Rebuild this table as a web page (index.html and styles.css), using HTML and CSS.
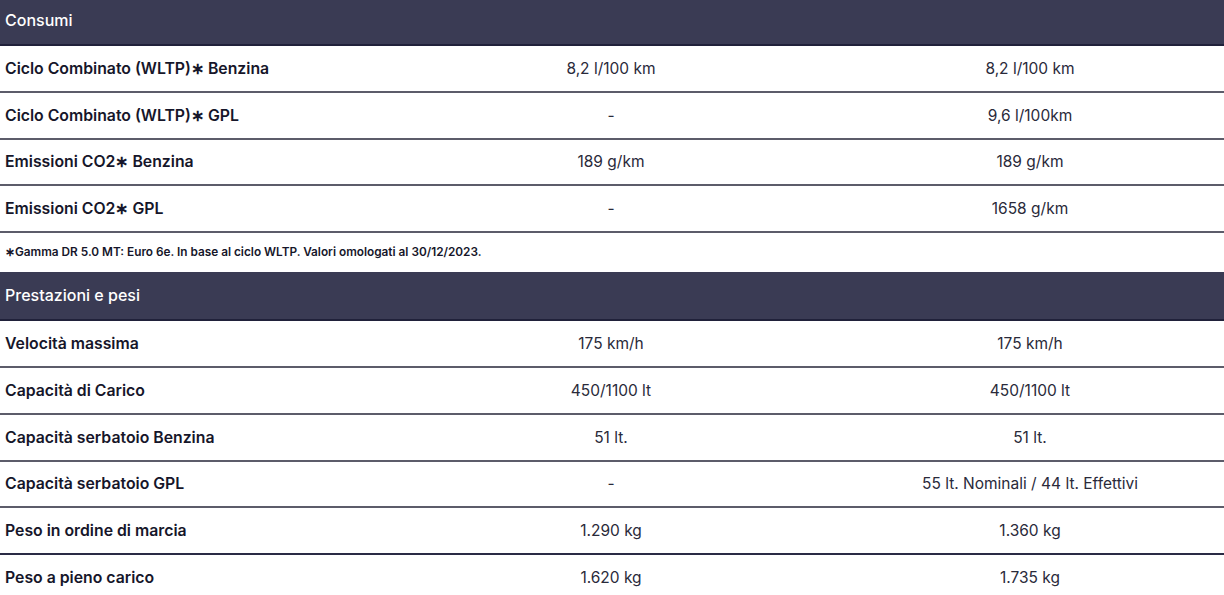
FILE: index.html
```html
<!DOCTYPE html>
<html lang="it">
<head>
<meta charset="utf-8">
<link rel="stylesheet" href="styles.css">
</head>
<body>
<div class="specs">
  <section class="group">
    <div class="group-head">Consumi</div>
    <div class="row"><div class="label">Ciclo Combinato (WLTP)∗ Benzina</div><div class="val">8,2 l/100 km</div><div class="val">8,2 l/100 km</div></div>
    <div class="row"><div class="label">Ciclo Combinato (WLTP)∗ GPL</div><div class="val">-</div><div class="val">9,6 l/100km</div></div>
    <div class="row"><div class="label">Emissioni CO2∗ Benzina</div><div class="val">189 g/km</div><div class="val">189 g/km</div></div>
    <div class="row"><div class="label">Emissioni CO2∗ GPL</div><div class="val">-</div><div class="val">1658 g/km</div></div>
    <div class="note">∗Gamma DR 5.0 MT: Euro 6e. In base al ciclo WLTP. Valori omologati al 30/12/2023.</div>
  </section>
  <section class="group">
    <div class="group-head">Prestazioni e pesi</div>
    <div class="row"><div class="label">Velocità massima</div><div class="val">175 km/h</div><div class="val">175 km/h</div></div>
    <div class="row"><div class="label">Capacità di Carico</div><div class="val">450/1100 lt</div><div class="val">450/1100 lt</div></div>
    <div class="row"><div class="label">Capacità serbatoio Benzina</div><div class="val">51 lt.</div><div class="val">51 lt.</div></div>
    <div class="row"><div class="label">Capacità serbatoio GPL</div><div class="val">-</div><div class="val">55 lt. Nominali / 44 lt. Effettivi</div></div>
    <div class="row dark"><div class="label">Peso in ordine di marcia</div><div class="val">1.290 kg</div><div class="val">1.360 kg</div></div>
    <div class="row dark"><div class="label">Peso a pieno carico</div><div class="val">1.620 kg</div><div class="val">1.735 kg</div></div>
  </section>
</div>
</body>
</html>
```

FILE: styles.css
```css
* { box-sizing: border-box; }
html, body { margin: 0; padding: 0; background: #fff; }
body {
  font-family: Inter, "Noto Sans", sans-serif;
  color: #1b1b2c;
  overflow: hidden;
}
.specs { margin-top: -3px; }
.group-head {
  background: #3a3b54;
  color: #fff;
  font-size: 16px;
  font-weight: 500;
  line-height: 23px;
  padding: 12px 5px;
  border-bottom: 2px solid #20213a;
}
.row {
  display: grid;
  grid-template-columns: 386px 450px 1fr;
  align-items: center;
  height: 46.8px;
  border-bottom: 2px solid #5c5c6a;
}
.row.dark { border-bottom-color: #2a2b45; }
.label {
  padding-left: 5px;
  font-size: 15.8px;
  font-weight: 600;
  color: #16162a;
}
.val {
  text-align: center;
  font-size: 15.5px;
  font-weight: 400;
  color: #2a2a3a;
}
.note {
  font-size: 11.8px;
  font-weight: 600;
  line-height: 15px;
  padding: 12px 5px;
  color: #16162a;
}
```
